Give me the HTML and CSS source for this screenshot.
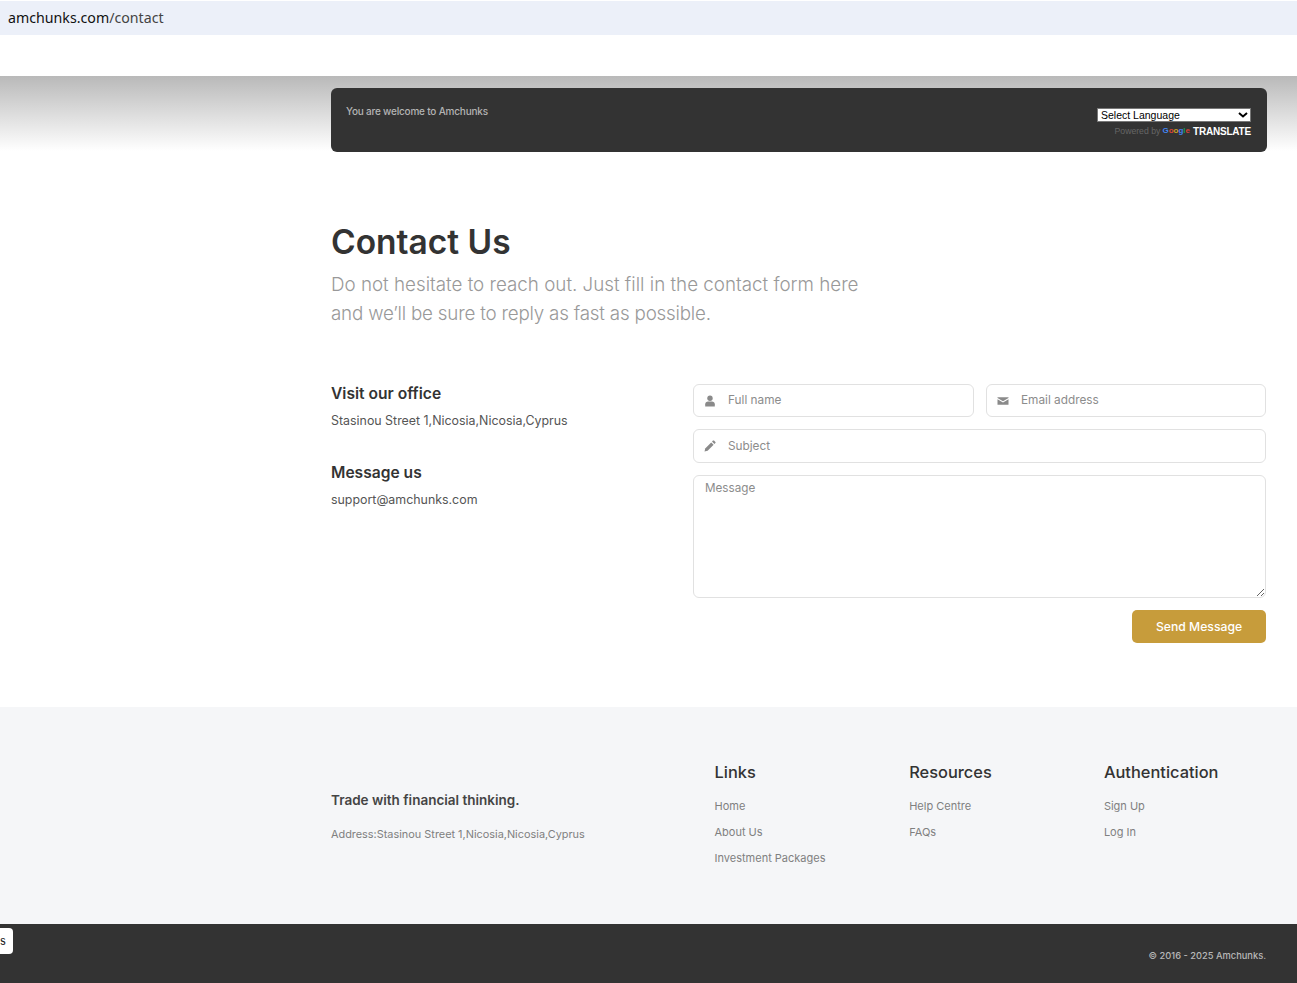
FILE: index.html
```html
<!DOCTYPE html>
<html lang="en">
<head>
    <meta charset="UTF-8">
    <meta name="viewport" content="width=device-width, initial-scale=1.0">
    <title>Contact Us - Amchunks</title>
    <link rel="stylesheet" href="styles.css">
</head>
<body>
    <div class="url-bar"><span class="url-host">amchunks.com</span>/contact</div>

    <div class="top-section">
        <div class="notice-bar">
            <span class="notice-text">You are welcome to Amchunks</span>
            <div class="translate">
                <div class="translate-picker">
                    <select class="translate-select">
                        <option>Select Language</option>
                    </select>
                    <svg class="picker-arrow" viewBox="0 0 10 6" width="10" height="6"><path d="M1 1l4 3.500L9 1" fill="none" stroke="#000" stroke-width="2"/></svg>
                </div>
                <div class="translate-credit">
                    <span class="powered">Powered by</span>
                    <span class="google"><span class="g-blue">G</span><span class="g-red">o</span><span class="g-yellow">o</span><span class="g-blue">g</span><span class="g-green">l</span><span class="g-red">e</span></span>
                    <span class="translate-word">TRANSLATE</span>
                </div>
            </div>
        </div>
    </div>

    <main class="contact">
        <h1 class="contact-title">Contact Us</h1>
        <p class="contact-lead">Do not hesitate to reach out. Just fill in the contact form here<br><span class="lead-tight">and we’ll be sure to reply as fast as possible.</span></p>

        <div class="contact-grid">
            <div class="contact-info">
                <h2 class="info-title">Visit our office</h2>
                <p class="info-text">Stasinou Street 1,Nicosia,Nicosia,Cyprus</p>
                <h2 class="info-title">Message us</h2>
                <p class="info-text">support@amchunks.com</p>
            </div>

            <form class="contact-form">
                <div class="form-row">
                    <label class="field">
                        <svg class="field-icon" viewBox="0 0 12 12" width="12" height="12"><circle cx="6" cy="3.2" r="2.7"/><path d="M1.200 11.500V9.200C1.200 7.400 2.600 6.600 4 6.600h4c1.400 0 2.800.8 2.800 2.600v2.300z"/></svg>
                        <input class="field-input" type="text" placeholder="Full name">
                    </label>
                    <label class="field">
                        <svg class="field-icon" viewBox="0 0 12 12" width="12" height="12"><path d="M.5 2.200h11v.9L6 6.300.5 3.100z"/><path d="M.5 4.300 6 7.500l5.500-3.200v5.500H.5z"/></svg>
                        <input class="field-input" type="email" placeholder="Email address">
                    </label>
                </div>
                <label class="field field-wide">
                    <svg class="field-icon" viewBox="0 0 12 12" width="12" height="12"><path d="M.5 11.500l.7-3.100 6-6 2.400 2.400-6 6z"/><path d="M8 1.600 9 .6c.3-.3.7-.3 1 0l1.400 1.400c.3.300.3.700 0 1l-1 1z"/></svg>
                    <input class="field-input" type="text" placeholder="Subject">
                </label>
                <textarea class="field-area" placeholder="Message"></textarea>
                <button class="send-btn" type="button">Send Message</button>
            </form>
        </div>
    </main>

    <footer>
        <div class="footer-main">
            <div class="footer-brand">
                <h3 class="brand-title">Trade with financial thinking.</h3>
                <p class="brand-address">Address:Stasinou Street 1,Nicosia,Nicosia,Cyprus</p>
            </div>
            <div class="footer-col">
                <h4 class="col-title">Links</h4>
                <a class="col-link" href="#">Home</a>
                <a class="col-link" href="#">About Us</a>
                <a class="col-link" href="#">Investment Packages</a>
            </div>
            <div class="footer-col">
                <h4 class="col-title">Resources</h4>
                <a class="col-link" href="#">Help Centre</a>
                <a class="col-link" href="#">FAQs</a>
            </div>
            <div class="footer-col">
                <h4 class="col-title">Authentication</h4>
                <a class="col-link" href="#">Sign Up</a>
                <a class="col-link" href="#">Log In</a>
            </div>
        </div>
        <div class="footer-bottom">© 2016 - 2025 Amchunks.</div>
    </footer>

    <div class="side-tab">s</div>
</body>
</html>
```

FILE: styles.css
```css
* {
    box-sizing: border-box;
}

body {
    margin: 0;
    background: #fff;
    color: #333;
    font-family: Inter, 'Noto Sans', sans-serif;
}

.url-bar {
    height: 34px;
    margin-top: 1px;
    padding: 8px 8px 0;
    background: #ecf0f9;
    color: #444;
    font-family: 'Noto Sans', sans-serif;
    font-size: 14.2px;
    line-height: 18px;
}

.url-host {
    color: #111;
}

.top-section {
    margin-top: 41px;
    padding: 12px 30px 0 331px;
    background: linear-gradient(#b9b9b9, #fff) no-repeat;
    background-size: 100% 75px;
}

.notice-bar {
    display: flex;
    justify-content: space-between;
    height: 64px;
    padding: 16px 16px 0 15px;
    background: #333;
    border-radius: 6px;
}

.notice-text {
    color: #b4b4b4;
    font-size: 10px;
    font-weight: 500;
    line-height: 14px;
    letter-spacing: -0.2px;
}

.translate {
    display: flex;
    flex-direction: column;
    align-items: flex-end;
    padding-top: 4px;
}

.translate-picker {
    position: relative;
    width: 154px;
    height: 14px;
}

.translate-select {
    display: block;
    width: 100%;
    height: 100%;
    padding: 0 0 0 3px;
    border: 1px solid #777;
    border-radius: 0;
    background: #fff;
    color: #000;
    font-family: 'Liberation Sans', sans-serif;
    font-size: 10.5px;
    line-height: 12px;
    appearance: none;
}

.picker-arrow {
    position: absolute;
    top: 4px;
    right: 3px;
    pointer-events: none;
}

.translate-credit {
    display: flex;
    align-items: center;
    height: 14px;
    margin-top: 2px;
    font-family: 'Liberation Sans', sans-serif;
}

.powered {
    color: #666;
    font-size: 8.7px;
    margin-right: 2px;
}

.google {
    font-size: 8px;
    font-weight: 700;
    margin-right: 3px;
    position: relative;
    top: -1px;
}

.g-blue { color: #4285f4; }
.g-red { color: #db4437; }
.g-yellow { color: #c9a227; }
.g-green { color: #0f9d58; }

.translate-word {
    color: #fff;
    font-size: 10px;
    font-weight: 700;
    letter-spacing: -0.2px;
}

.contact {
    padding: 69px 31px 64px 331px;
}

.contact-title {
    margin: 0;
    color: #333;
    font-size: 33.5px;
    font-weight: 600;
    line-height: 42px;
}

.contact-lead {
    margin: 7px 0 0;
    color: #999;
    font-size: 18.8px;
    font-weight: 300;
    line-height: 29px;
}

.lead-tight {
    letter-spacing: -0.2px;
}

.contact-grid {
    display: grid;
    grid-template-columns: 362px 573px;
    margin-top: 56px;
}

.info-title {
    margin: 0;
    color: #333;
    font-size: 15.6px;
    font-weight: 600;
    line-height: 20px;
}

.info-text {
    margin: 8px 0 34px;
    color: #555;
    font-size: 12.4px;
    line-height: 17px;
}

.contact-form {
    display: flex;
    flex-direction: column;
    gap: 12px;
}

.form-row {
    display: grid;
    grid-template-columns: 281px 280px;
    gap: 12px;
}

.field {
    display: flex;
    align-items: center;
    height: 33px;
    padding-left: 10px;
    border: 1px solid #e1e1e1;
    border-radius: 6px;
}

.field-wide {
    height: 34px;
}

.field-icon {
    flex: none;
    fill: #8a8a8a;
    margin-right: 12px;
}

.field-input {
    flex: 1;
    min-width: 0;
    height: 100%;
    padding: 0 0 2px;
    border: 0;
    outline: 0;
    background: transparent;
    font-family: inherit;
    font-size: 11.8px;
}

.field-wide .field-input {
    padding-bottom: 1px;
}

.field-area {
    display: block;
    width: 100%;
    height: 123px;
    padding: 4px 11px;
    border: 1px solid #e1e1e1;
    border-radius: 6px;
    outline: 0;
    font-family: inherit;
    font-size: 11.7px;
    line-height: 16px;
}

.field-input::placeholder,
.field-area::placeholder {
    color: #8c8c8c;
    opacity: 1;
}

.send-btn {
    align-self: flex-end;
    width: 134px;
    height: 33px;
    padding: 0;
    border: 0;
    border-radius: 5px;
    background: #c79c3b;
    color: #fff;
    font-family: inherit;
    font-size: 12.2px;
    font-weight: 500;
}

.footer-main {
    display: grid;
    grid-template-columns: 383.5px 194.7px 194.7px 163px;
    height: 217px;
    padding: 55px 0 0 331px;
    background: #f5f6f8;
}

.footer-brand {
    padding-top: 28px;
}

.brand-title {
    margin: 0;
    color: #444;
    font-size: 13.5px;
    font-weight: 600;
    line-height: 20px;
}

.brand-address {
    margin: 17px 0 0;
    color: #808080;
    font-size: 10.9px;
    line-height: 14px;
}

.footer-col {
    display: flex;
    flex-direction: column;
    align-items: flex-start;
}

.col-title {
    margin: 0 0 11px;
    color: #333;
    font-size: 16.4px;
    font-weight: 500;
    line-height: 20px;
}

.col-link {
    color: #808080;
    font-size: 11px;
    line-height: 26px;
    text-decoration: none;
}

.footer-bottom {
    height: 59px;
    padding: 25px 31px 0 0;
    background: #333;
    color: #b8b8b8;
    font-size: 9.3px;
    font-weight: 500;
    line-height: 14px;
    text-align: right;
}

.side-tab {
    position: absolute;
    left: 0;
    top: 928px;
    width: 13px;
    height: 26px;
    padding-top: 5px;
    border-radius: 0 4px 4px 0;
    background: #fff;
    color: #222;
    font-size: 11px;
    line-height: 16px;
}
```
